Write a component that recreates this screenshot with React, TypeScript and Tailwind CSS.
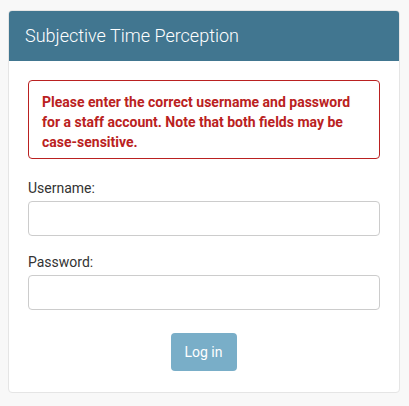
import React from "react";

export default function App() {
  return (
    <div className="w-[409px] h-[406px] bg-[#f8f8f8] pt-[10px] px-[8px]" style={{ fontFamily: "Roboto, 'Liberation Sans', sans-serif" }}>
      <div className="w-[392px] h-[383px] bg-white border border-[#e5e5e5] rounded-[4px] overflow-hidden">
        <div className="h-[50px] bg-[#417690] flex items-center pl-[16px]">
          <h1 className="text-[18px] font-light text-white leading-none">Subjective Time Perception</h1>
        </div>
        <div className="px-[19px] pt-[19px]">
          <div className="border border-[#ba2121] rounded-[4px] h-[79px] pl-[13px] pt-[11px]">
            <p className="text-[#ba2121] font-bold text-[14px] leading-[20px] w-[320px]">
              Please enter the correct username and password for a staff account. Note that both fields may be case-sensitive.
            </p>
          </div>
          <label className="block mt-[20px] text-[14px] leading-[18px] text-[#333]">Username:</label>
          <input className="block mt-[4px] w-[352px] h-[35px] border border-[#ccc] rounded-[4px]" />
          <label className="block mt-[17px] text-[14px] leading-[18px] text-[#333]">Password:</label>
          <input type="password" className="block mt-[4px] w-[352px] h-[35px] border border-[#ccc] rounded-[4px]" />
          <div className="flex justify-center mt-[23px]">
            <button className="ml-[-1px] w-[66px] h-[38px] bg-[#79aec8] text-white text-[14px] rounded-[4px]">Log in</button>
          </div>
        </div>
      </div>
    </div>
  );
}
